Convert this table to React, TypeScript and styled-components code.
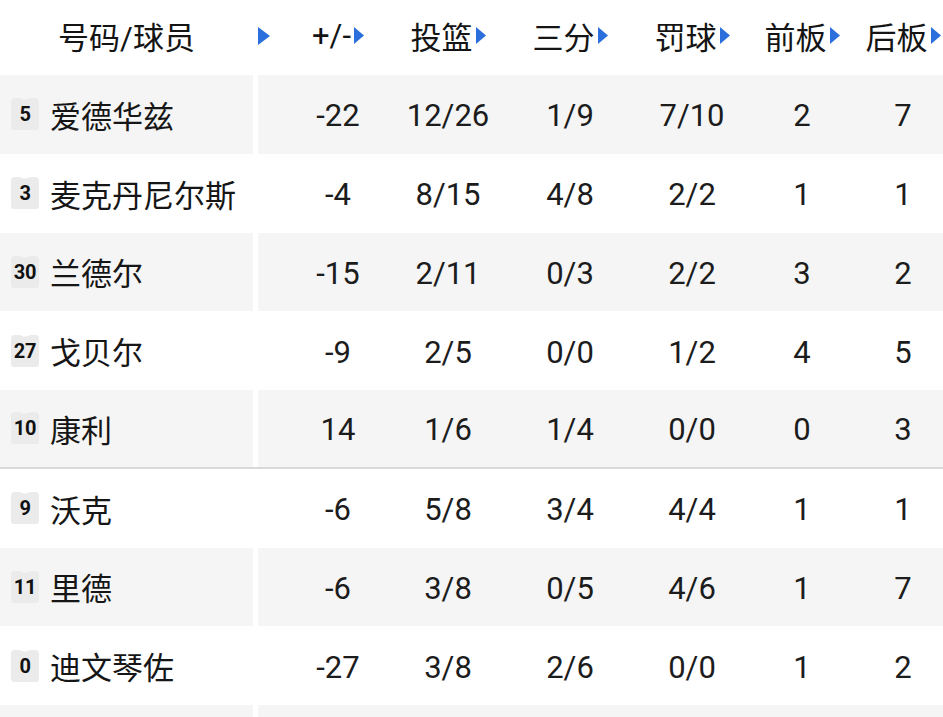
import * as React from "react";
import styled, { createGlobalStyle } from "styled-components";

const GlobalStyle = createGlobalStyle`
  html, body {
    margin: 0;
    padding: 0;
    background: #ffffff;
    overflow: hidden;
  }
  body {
    font-family: Roboto, "Noto Sans CJK SC", "Noto Sans", sans-serif;
    color: #161616;
  }
`;

const COLUMNS = "253px 30px 110px 110px 134px 110px 110px 92px";

export const Table = styled.div`
  width: 943px;
  display: flex;
  flex-direction: column;
`;

export const HeaderRow = styled.div`
  display: grid;
  grid-template-columns: ${COLUMNS};
  height: 75px;
  padding-bottom: 4px;
  box-sizing: border-box;
  align-items: center;
  font-size: 31px;
`;

export const HeaderCell = styled.div`
  display: flex;
  align-items: center;
  justify-content: center;
  gap: 3px;
  white-space: nowrap;
  color: #141414;
`;

export const SortMark = styled.div`
  justify-self: start;
  margin-left: 5px;
  display: flex;
  align-items: center;
`;

export const Row = styled.div<{ $shaded: boolean; $divider?: boolean }>`
  display: grid;
  grid-template-columns: ${COLUMNS};
  height: 78.75px;
  box-sizing: border-box;
  align-items: center;
  background: ${(p) => (p.$shaded ? "#f5f5f5" : "#ffffff")};
  border-bottom: ${(p) => (p.$divider ? "2px solid #d9d9d9" : "none")};
  font-size: 31px;
`;

export const PlayerCell = styled.div`
  display: flex;
  align-items: center;
  gap: 10px;
  padding-left: 10px;
  height: 100%;
  box-sizing: border-box;
`;

export const Gap = styled.div`
  align-self: stretch;
  border-left: 5px solid #ffffff;
`;

export const Badge = styled.div`
  position: relative;
  width: 30px;
  height: 34px;
  display: flex;
  align-items: center;
  justify-content: center;
  flex-shrink: 0;
`;

export const BadgeShape = styled.svg`
  position: absolute;
  inset: 0;
`;

export const BadgeNumber = styled.span`
  position: relative;
  font-family: Roboto, "Liberation Sans", sans-serif;
  font-weight: 700;
  font-size: 20px;
  letter-spacing: -0.3px;
  color: #111111;
`;

export const Name = styled.span`
  color: #161616;
  white-space: nowrap;
`;

export const StatCell = styled.div`
  text-align: center;
  color: #1c1c1c;
  white-space: nowrap;
  padding-top: 3px;
`;

const Triangle = ({ w, h }: { w: number; h: number }) => (
  <svg width={w} height={h} viewBox={`0 0 ${w} ${h}`}>
    <polygon points={`0,0 ${w},${h / 2} 0,${h}`} fill="#2a6fdc" />
  </svg>
);

const Jersey = () => (
  <BadgeShape width="30" height="34" viewBox="0 0 30 34">
    <path
      d="M1 5 Q1 1 5 1 L10 1 Q15 4 20 1 L25 1 Q29 1 29 5 L29 30 Q29 33 26 33 L4 33 Q1 33 1 30 Z"
      fill="#ebebeb"
    />
  </BadgeShape>
);

const headers = ["+/-", "投篮", "三分", "罚球", "前板", "后板"];

const players: [string, string, string, string, string, string, string, string][] = [
  ["5", "爱德华兹", "-22", "12/26", "1/9", "7/10", "2", "7"],
  ["3", "麦克丹尼尔斯", "-4", "8/15", "4/8", "2/2", "1", "1"],
  ["30", "兰德尔", "-15", "2/11", "0/3", "2/2", "3", "2"],
  ["27", "戈贝尔", "-9", "2/5", "0/0", "1/2", "4", "5"],
  ["10", "康利", "14", "1/6", "1/4", "0/0", "0", "3"],
  ["9", "沃克", "-6", "5/8", "3/4", "4/4", "1", "1"],
  ["11", "里德", "-6", "3/8", "0/5", "4/6", "1", "7"],
  ["0", "迪文琴佐", "-27", "3/8", "2/6", "0/0", "1", "2"],
];

export default function App() {
  return (
    <>
      <GlobalStyle />
      <Table>
        <HeaderRow>
          <HeaderCell>号码/球员</HeaderCell>
          <SortMark>
            <Triangle w={12} h={18} />
          </SortMark>
          {headers.map((h) => (
            <HeaderCell key={h}>
              {h}
              <Triangle w={10} h={17} />
            </HeaderCell>
          ))}
        </HeaderRow>
        {players.map((p, i) => (
          <Row key={p[1]} $shaded={i % 2 === 0} $divider={i === 4}>
            <PlayerCell>
              <Badge>
                <Jersey />
                <BadgeNumber>{p[0]}</BadgeNumber>
              </Badge>
              <Name>{p[1]}</Name>
            </PlayerCell>
            <Gap />
            {p.slice(2).map((v, j) => (
              <StatCell key={j}>{v}</StatCell>
            ))}
          </Row>
        ))}
        <Row $shaded={true}>
          <PlayerCell />
          <Gap />
        </Row>
      </Table>
    </>
  );
}
